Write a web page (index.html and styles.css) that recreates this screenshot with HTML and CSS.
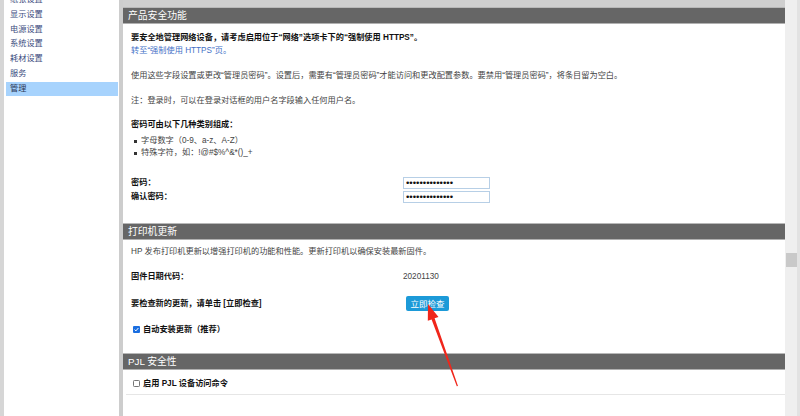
FILE: index.html
```html
<!DOCTYPE html>
<html>
<head>
    <meta charset="UTF-8">
    <title>管理</title>
    <link rel="stylesheet" href="styles.css">
</head>
<body>
<div class="page">
    <!-- left menu -->
    <div class="sidebar">
        <ul class="nav">
            <li>纸张设置</li>
            <li>显示设置</li>
            <li>电源设置</li>
            <li>系统设置</li>
            <li>耗材设置</li>
            <li>服务</li>
            <li class="active">管理</li>
        </ul>
    </div>

    <div class="main">
        <div class="top-strip"></div>

        <!-- product security -->
        <div class="section-title">产品安全功能</div>
        <div class="section-body security">
            <p class="intro"><b>要安全地管理网络设备，请考虑启用位于“网络”选项卡下的“强制使用 HTTPS”。</b><br>
                <a href="#">转至“强制使用 HTTPS”页。</a></p>
            <p class="gap">使用这些字段设置或更改“管理员密码”。设置后，需要有“管理员密码”才能访问和更改配置参数。要禁用“管理员密码”，将条目留为空白。</p>
            <p class="gap">注：登录时，可以在登录对话框的用户名字段输入任何用户名。</p>
            <p class="gap strong">密码可由以下几种类别组成：</p>
            <ul class="rules">
                <li>字母数字（0-9、a-z、A-Z）</li>
                <li>特殊字符，如：!@#$%^&amp;*()_+</li>
            </ul>
            <div class="fields">
                <div class="field-row">
                    <label class="label" for="pw">密码：</label>
                    <input type="text" class="masked" id="pw" value="••••••••••••••" readonly>
                </div>
                <div class="field-row">
                    <label class="label" for="pw2">确认密码：</label>
                    <input type="text" class="masked" id="pw2" value="••••••••••••••" readonly>
                </div>
            </div>
        </div>

        <!-- printer update -->
        <div class="section-title">打印机更新</div>
        <div class="section-body update">
            <p>HP 发布打印机更新以增强打印机的功能和性能。更新打印机以确保安装最新固件。</p>
            <div class="info-row">
                <span class="label">固件日期代码：</span>
                <span>20201130</span>
            </div>
            <div class="button-row">
                <span class="label">要检查新的更新，请单击 [立即检查]</span>
                <button class="check-button">立即检查</button>
            </div>
            <div class="check-row">
                <svg class="box" width="7" height="7" viewBox="0 0 7 7">
                    <rect width="7" height="7" rx="1" fill="#1a6ee0"/>
                    <path d="M1.6 3.6 L2.9 4.9 L5.4 2" stroke="#fff" stroke-width="1" fill="none"/>
                </svg>
                自动安装更新（推荐）
            </div>
        </div>

        <!-- PJL -->
        <div class="section-title">PJL 安全性</div>
        <div class="section-body pjl">
            <div class="check-row">
                <svg class="box" width="7" height="7" viewBox="0 0 7 7">
                    <rect x="0.5" y="0.5" width="6" height="6" rx="0.8" fill="#fff" stroke="#767676"/>
                </svg>
                启用 PJL 设备访问命令
            </div>
        </div>
    </div>

    <div class="scrollbar"><div class="thumb"></div></div>
</div>

<!-- red annotation arrow -->
<svg class="arrow" width="800" height="416" viewBox="0 0 800 416">
    <polygon points="428,304 438.5,317 434.6,318.2 458,386 456.8,386.3 431.6,319.4 427.8,320.8" fill="#f0261b"/>
</svg>
</body>
</html>
```

FILE: styles.css
```css
body {
    margin: 0;
    font-family: "Liberation Sans", "Noto Sans CJK SC", sans-serif;
    font-size: 8.2px;
    color: #444;
    background: #fff;
    overflow: hidden;
}
.page {
    display: flex;
    height: 416px;
}
.sidebar {
    width: 115px;
    border-left: 4px solid #d6d6d6;
    border-right: 4px solid #cdcdcd;
    background: #fff;
    overflow: hidden;
}
.nav {
    list-style: none;
    margin: -6.8px 1px 0 2px;
    padding: 0;
}
.nav li {
    height: 14.75px;
    line-height: 14.75px;
    padding-left: 4px;
    color: #3c4d7e;
}
.nav li.active {
    background: #a7d3fd;
    color: #2b3656;
}
.main {
    width: 662px;
    background: #fff;
}
.top-strip {
    height: 7px;
    background: #cfcfcf;
}
.section-title {
    height: 15px;
    line-height: 15px;
    background: #666;
    border-top: 1px solid #b8b8b8;
    border-bottom: 1px solid #b0b0b0;
    color: #fff;
    font-size: 9.8px;
    padding-left: 5px;
}
.section-body {
    padding-left: 8px;
    line-height: 13px;
}
.section-body p {
    margin: 0;
}
.security {
    padding-top: 6.5px;
    padding-bottom: 19.5px;
}
.intro b {
    color: #111;
}
.intro a {
    color: #3f6fc6;
    text-decoration: none;
}
.gap {
    margin-top: 12px !important;
}
.strong {
    font-weight: bold;
    color: #111;
    margin-top: 11.5px !important;
}
.rules {
    margin: 4px 0 0 0;
    padding-left: 10px;
    line-height: 12px;
}
.rules li {
    list-style: none;
    position: relative;
}
.rules li::before {
    content: "";
    position: absolute;
    left: -7px;
    top: 5px;
    width: 2.5px;
    height: 2.5px;
    background: #333;
}
.fields {
    margin-top: 16.5px;
}
.field-row {
    display: flex;
    align-items: center;
    height: 14px;
}
.label {
    width: 272px;
    font-weight: bold;
    color: #111;
}
.masked {
    width: 87px;
    height: 12px;
    box-sizing: border-box;
    border: 1px solid #b7cfe6;
    padding: 0 2px;
    font-family: "Liberation Sans", sans-serif;
    font-size: 9.6px;
    color: #111;
    outline: none;
}
.update {
    padding-top: 4.5px;
    padding-bottom: 17.5px;
}
.info-row {
    display: flex;
    margin-top: 12px;
}
.button-row {
    display: flex;
    align-items: center;
    height: 15px;
    margin-top: 13px;
}
.check-button {
    margin-left: 3px;
    width: 43px;
    height: 15px;
    padding: 0;
    border: none;
    border-radius: 2px;
    background: #1c9ad8;
    color: #fff;
    font-family: inherit;
    font-size: 8.5px;
}
.check-row {
    display: flex;
    align-items: center;
    height: 13px;
    font-weight: bold;
    color: #111;
}
.update .check-row {
    margin-top: 12px;
}
.box {
    margin: 0 3px 0 2px;
    flex-shrink: 0;
}
.pjl {
    padding-top: 6.5px;
    padding-bottom: 4.5px;
    margin-left: 3px;
    padding-left: 5px;
    border-bottom: 1px solid #e6e6e6;
}
.scrollbar {
    width: 12px;
    background: #efefef;
    border-right: 3px solid #e2e2e2;
}
.thumb {
    margin: 253px 0 0 1px;
    width: 11px;
    height: 14px;
    background: #c9c9c9;
}
.arrow {
    position: absolute;
    left: 0;
    top: 0;
    pointer-events: none;
}
```
